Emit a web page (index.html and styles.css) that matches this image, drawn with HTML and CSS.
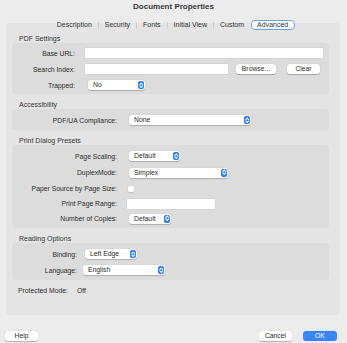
FILE: index.html
```html
<!DOCTYPE html>
<html lang="en">
<head>
    <meta charset="UTF-8">
    <title>Document Properties</title>
    <link rel="stylesheet" href="styles.css">
</head>
<body>
    <div class="window">
        <div class="titlebar">Document Properties</div>

        <div class="tabs">
            <span class="tab">Description</span><span class="sep"></span>
            <span class="tab">Security</span><span class="sep"></span>
            <span class="tab">Fonts</span><span class="sep"></span>
            <span class="tab">Initial View</span><span class="sep"></span>
            <span class="tab">Custom</span>
            <span class="tab active">Advanced</span>
        </div>

        <div class="panel">
            <div class="section-title">PDF Settings</div>
            <div class="group group-pdf">
                <label>Base URL:</label>
                <div class="field" style="width: 238px"></div>

                <label>Search Index:</label>
                <div class="field-row">
                    <div class="field" style="width: 143px"></div>
                    <button class="btn browse">Browse...</button>
                    <button class="btn clear">Clear</button>
                </div>

                <label>Trapped:</label>
                <div class="select shift-3" style="width: 57px">No<span class="stepper"></span></div>
            </div>

            <div class="section-title">Accessibility</div>
            <div class="group group-wide group-acc">
                <label>PDF/UA Compliance:</label>
                <div class="select" style="width: 122px">None<span class="stepper"></span></div>
            </div>

            <div class="section-title">Print Dialog Presets</div>
            <div class="group group-wide group-print">
                <label>Page Scaling:</label>
                <div class="select" style="width: 51px">Default<span class="stepper"></span></div>

                <label>DuplexMode:</label>
                <div class="select" style="width: 99px">Simplex<span class="stepper"></span></div>

                <label>Paper Source by Page Size:</label>
                <div class="checkbox"></div>

                <label>Print Page Range:</label>
                <div class="field shift-back" style="width: 88px"></div>

                <label>Number of Copies:</label>
                <div class="select" style="width: 42px">Default<span class="stepper"></span></div>
            </div>

            <div class="section-title">Reading Options</div>
            <div class="group group-reading">
                <label>Binding:</label>
                <div class="select" style="width: 52px">Left Edge<span class="stepper"></span></div>

                <label>Language:</label>
                <div class="select shift-back" style="width: 82px">English<span class="stepper"></span></div>
            </div>

            <div class="protected">
                <span>Protected Mode:</span>
                <span class="value">Off</span>
            </div>
        </div>

        <div class="footer">
            <button class="btn dlg">Help</button>
            <span class="spacer"></span>
            <button class="btn dlg">Cancel</button>
            <button class="btn dlg primary">OK</button>
        </div>
    </div>
</body>
</html>
```

FILE: styles.css
```css
body {
    margin: 0;
    background: #ececec;
    font-family: 'Liberation Sans', Arial, sans-serif;
    font-size: 6.8px;
    color: #2b2b2b;
}
.window {
    width: 347px;
    height: 343px;
    overflow: hidden;
}
.titlebar {
    height: 19px;
    line-height: 13px;
    text-align: center;
    font-weight: bold;
    font-size: 8px;
    color: #3a3a3a;
}
.tabs {
    position: relative;
    z-index: 1;
    display: flex;
    justify-content: center;
    align-items: center;
    height: 12px;
    margin-bottom: -8px;
    padding-right: 1px;
}
.tab {
    padding: 0 6px;
    font-size: 7px;
    line-height: 12px;
    color: #333;
}
.tab.active {
    margin-left: 1px;
    padding: 0 6px 0 5px;
    background: #fff;
    border: 1.5px solid #6ea2f5;
    border-radius: 4px;
    line-height: 8px;
}
.sep {
    width: 1px;
    height: 7px;
    background: #cfcfcf;
}
.panel {
    width: 334px;
    height: 292px;
    margin-left: 6px;
    padding: 5px 11px 0 6px;
    box-sizing: border-box;
    background: #e4e4e4;
    border-radius: 4px;
}
.section-title {
    padding: 6px 0 0 7px;
    line-height: 9px;
    height: 9px;
    font-size: 7px;
    color: #333;
}
.group {
    display: grid;
    grid-template-columns: 63px auto;
    column-gap: 10px;
    grid-auto-rows: 16px;
    align-items: center;
    justify-items: start;
    background: #dcdcdc;
    border-radius: 4px;
    padding: 2px 0 1px;
}
.group label {
    justify-self: end;
    color: #2b2b2b;
}
.group-wide {
    grid-template-columns: 105px auto;
    column-gap: 12px;
}
.group-acc {
    padding: 3px 0 2px;
}
.group-print {
    grid-template-rows: 16px 17px 15px 15px 15px;
    padding: 3px 0 2px;
}
.group-reading {
    grid-template-columns: 65px auto;
    column-gap: 8px;
    padding: 3px 0 2px;
}
.field {
    height: 10px;
    background: #fff;
    border-radius: 1px;
    box-shadow: 0 0 0 0.5px rgba(0,0,0,0.06);
}
.field-row {
    display: flex;
    align-items: center;
}
.btn {
    height: 10px;
    padding: 0;
    border: none;
    border-radius: 3px;
    background: #fff;
    box-shadow: 0 0.5px 1px rgba(0,0,0,0.25);
    font-family: inherit;
    font-size: 6.8px;
    line-height: 10px;
    color: #2b2b2b;
}
.browse {
    width: 40px;
    margin-left: 8px;
}
.clear {
    width: 33px;
    margin-left: 11px;
}
.select {
    position: relative;
    height: 10px;
    line-height: 10px;
    padding-left: 5px;
    box-sizing: border-box;
    background: #fff;
    border-radius: 3px;
    box-shadow: 0 0.5px 1px rgba(0,0,0,0.22);
}
.stepper {
    position: absolute;
    right: 1px;
    top: 1px;
    width: 6px;
    height: 8px;
    border-radius: 2px;
    background: #2f7cf6;
}
.stepper::before,
.stepper::after {
    content: "";
    position: absolute;
    left: 2px;
    width: 1.5px;
    height: 1.5px;
    border-left: 0.8px solid #fff;
    border-top: 0.8px solid #fff;
}
.stepper::before {
    top: 1.6px;
    transform: rotate(45deg);
}
.stepper::after {
    bottom: 1.6px;
    transform: rotate(225deg);
}
.shift-3 {
    margin-left: 3px;
}
.shift-back {
    margin-left: -2px;
}
.checkbox {
    width: 6px;
    height: 6px;
    margin-left: -1px;
    background: #fff;
    border-radius: 1.5px;
    box-shadow: 0 0.5px 1px rgba(0,0,0,0.25);
}
.protected {
    display: flex;
    gap: 9px;
    margin-top: 6px;
    padding-left: 6px;
    line-height: 10px;
}
.footer {
    display: flex;
    align-items: center;
    gap: 11px;
    padding: 16px 10px 0 5px;
}
.spacer {
    flex: 1;
}
.btn.dlg {
    width: 33px;
    height: 9.5px;
    line-height: 9.5px;
}
.btn.primary {
    width: 34px;
    background: #3b86f7;
    color: #fff;
    box-shadow: none;
}
```
